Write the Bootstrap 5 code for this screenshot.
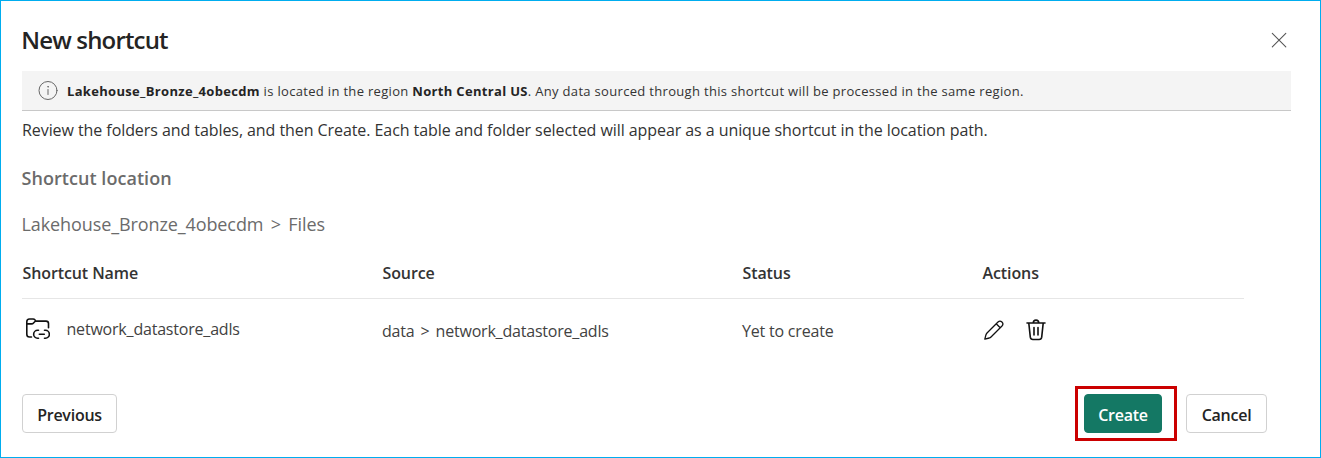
<!DOCTYPE html>
<html lang="en">
<head>
<meta charset="utf-8">
<meta name="viewport" content="width=device-width, initial-scale=1">
<title>New shortcut</title>
<link href="https://cdn.jsdelivr.net/npm/bootstrap@5.3.0/dist/css/bootstrap.min.css" rel="stylesheet">
<style>
  body { font-family: "Open Sans", "Noto Sans", sans-serif; font-size: 16px; color: #333; background: #fff; overflow: hidden; }
  .dialog { height: 458px; border: 1px solid #00adef; padding: 0 29px 0 21px; }
  .dialog-head { height: 70px; padding-top: 21px; }
  .dialog-title { font-size: 24px; line-height: 32px; padding-top: 2px; text-indent: -.8px; font-weight: 600; color: #242424; letter-spacing: -.83px; }
  .close-x { width: 16px; height: 16px; margin: 10px 4px 0 0; color: #555; }
  .notice { height: 40px; background: #f4f4f4; border-bottom: 1px solid #c8c8c8; padding-left: 16px; font-size: 13px; gap: 9px; color: #333; letter-spacing: .32px; }
  .notice span { padding-top: 2px; }
  .notice svg { color: #666; }
  .notice b { font-weight: 700; color: #242424; }
  .intro { line-height: 38px; letter-spacing: -.07px; }
  .loc-title, .loc-path { font-size: 18px; line-height: 28px; color: #6b6b6b; text-indent: -.5px; }
  .loc-title { margin-top: 15px; font-weight: 600; letter-spacing: .05px; }
  .loc-path { margin-top: 18px; letter-spacing: -.1px; word-spacing: 2.8px; }
  .items { width: 1222px; margin-top: 10px; table-layout: fixed; color: #424242; }
  .items th { height: 50px; padding: 0 0 0 .5px; vertical-align: middle; font-weight: 600; border-bottom: 1px solid #e6e6e6; letter-spacing: -.1px; color: #333; }
  .items td { height: 65px; padding: 0; vertical-align: middle; letter-spacing: -.2px; }
  .items .path-cell { word-spacing: 2.1px; }
  .item-name { gap: 16.500px; padding: 0 0 4px 4px; }
  .items svg { color: #111; }
  .actions { gap: 22px; padding: 0 0 1px 2px; }
  .foot { margin-top: 31px; padding-right: 24px; }
  .foot .btn { height: 39px; padding: 2px 0 0; border-radius: 4px; font-weight: 600; line-height: 1; letter-spacing: -.25px; }
  .foot .btn.btn-create, .foot .btn.btn-cancel { letter-spacing: -.25px; }
  .btn-plain { --bs-btn-color: #242424; --bs-btn-border-color: #d1d1d1; --bs-btn-bg: #fff; }
  .btn-create { --bs-btn-color: #fff; --bs-btn-bg: #147864; --bs-btn-border-color: #147864; width: 78px; }
  .btn-previous { width: 95px; }
  .btn-cancel { width: 81px; }
  .highlight { inset: -8px -15px -8px -9px; border: 3px solid #cb0000; pointer-events: none; }
  svg { display: block; flex: none; fill: none; stroke: currentColor; stroke-linecap: round; stroke-linejoin: round; }
</style>
</head>
<body>
<main class="dialog">
  <header class="dialog-head d-flex justify-content-between align-items-start">
    <h1 class="dialog-title m-0">New shortcut</h1>
    <button class="close-x btn p-0 border-0" aria-label="Close"><svg width="16" height="16" viewBox="0 0 16 16" stroke-width="1.1"><path d="M1.300 1.300l13.500 13.500M14.800 1.300L1.300 14.800"/></svg></button>
  </header>
  <div class="notice d-flex align-items-center">
    <svg width="20" height="20" viewBox="0 0 20 20" stroke-width="1"><circle cx="10" cy="9.500" r="9"/><path d="M10 8.500v5"/><circle cx="10" cy="5.800" r=".3"/></svg>
    <span><b>Lakehouse_Bronze_4obecdm</b> is located in the region <b>North Central US</b>. Any data sourced through this shortcut will be processed in the same region.</span>
  </div>
  <p class="m-0"><span class="intro">Review the folders and tables, and then Create. Each table and folder selected will appear as a unique shortcut in the location path.</span></p>
  <h2 class="loc-title mb-0">Shortcut location</h2>
  <div class="loc-path">Lakehouse_Bronze_4obecdm &gt; Files</div>
  <table class="items">
    <colgroup><col width="360"><col width="360"><col width="240"><col></colgroup>
    <thead><tr><th>Shortcut Name</th><th>Source</th><th>Status</th><th>Actions</th></tr></thead>
    <tbody><tr>
      <td><div class="item-name d-flex align-items-center">
        <svg width="24" height="22" viewBox="26 317.500 24 22" stroke-width="1.600"><path d="M31.500 336.500h-2q-2.700 0-2.700-2.700v-12.600q0-2.700 2.700-2.700h3.600q1.200 0 1.900.9l.8 1.200h10.200q2.500 0 2.500 2.500v4.200M26.800 323.400h4.700q1.300 0 2-.9l2-2M38.500 329.800h-.9a3.900 3.900 0 0 0 0 7.900h.9M44.500 329.800h.9a3.900 3.900 0 0 1 0 7.900h-.9M39.300 333.700h5"/></svg>
        <span>network_datastore_adls</span></div></td>
      <td class="path-cell">data &gt; network_datastore_adls</td>
      <td>Yet to create</td>
      <td><div class="actions d-flex align-items-center">
        <svg width="20" height="20" viewBox="0 0 20 20" stroke-width="1.300"><path d="M14 2L3 13q-.7.700-1 1.700L.8 19.200l4.500-1.200q1-.3 1.700-1L18 6a2.830 2.830 0 0 0-4-4zM12.200 3.800l4 4"/></svg>
        <svg width="20" height="22" viewBox="0 0 20 22" stroke-width="1.600"><path d="M1 4h18M7.300 3.800a2.700 2.700 0 0 1 5.400 0M2.800 4.200l1.500 14q.3 2.300 2.600 2.300h6.200q2.300 0 2.600-2.300l1.500-14M8 8.500v7.500M12 8.500v7.500"/></svg>
      </div></td>
    </tr></tbody>
  </table>
  <footer class="foot d-flex">
    <button class="btn btn-plain btn-previous">Previous</button>
    <div class="position-relative ms-auto me-4"><button class="btn btn-create">Create</button><span class="highlight position-absolute"></span></div>
    <button class="btn btn-plain btn-cancel">Cancel</button>
  </footer>
</main>
<script src="https://cdn.jsdelivr.net/npm/bootstrap@5.3.0/dist/js/bootstrap.bundle.min.js"></script>
</body>
</html>
